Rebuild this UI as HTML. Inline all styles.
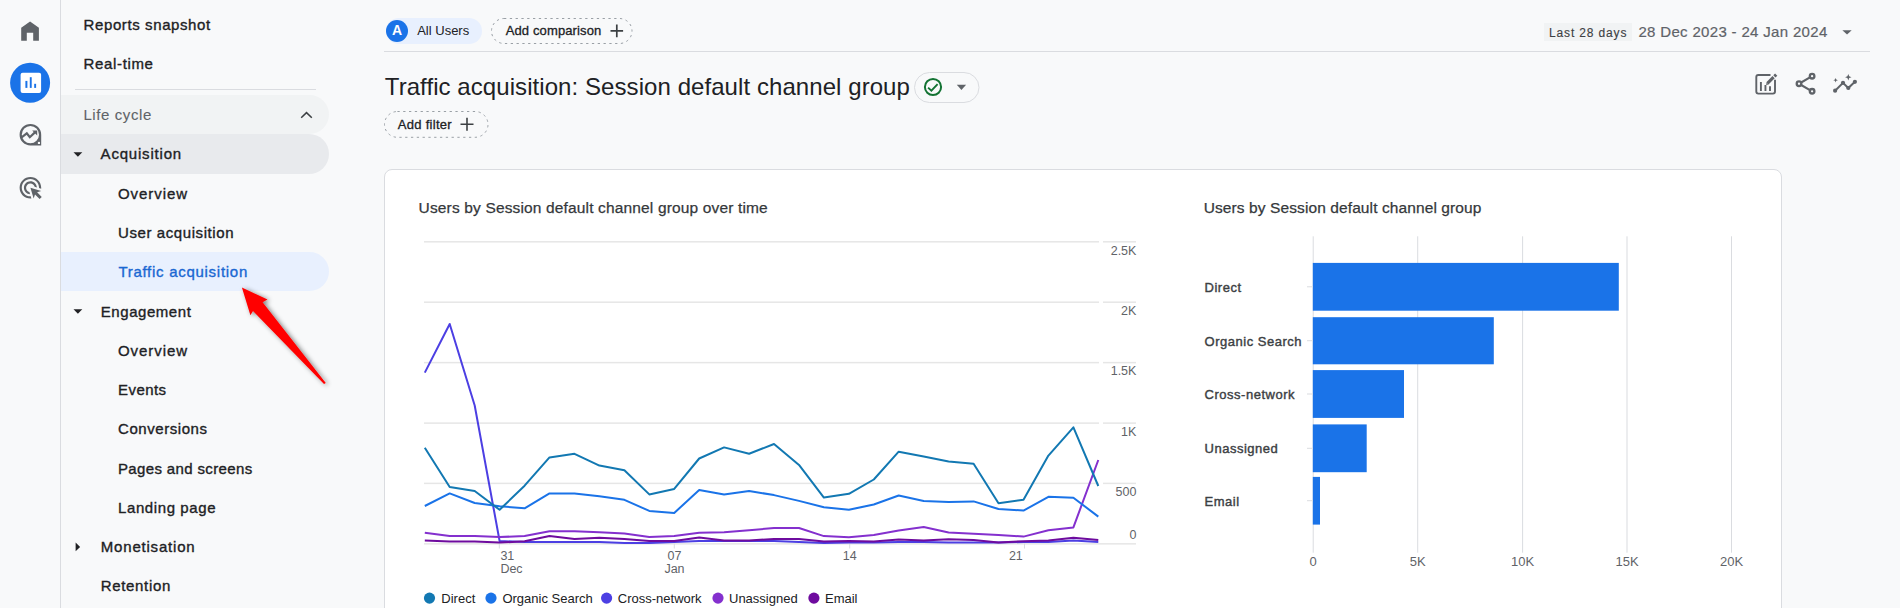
<!DOCTYPE html>
<html><head><meta charset="utf-8"><style>
html,body{margin:0;padding:0;}
body{width:1900px;height:608px;overflow:hidden;position:relative;background:#f8f9fa;font-family:"Liberation Sans", sans-serif;}
.t{position:absolute;white-space:nowrap;font-family:"Liberation Sans", sans-serif;}
</style></head><body>
<div style="position:absolute;left:60px;top:0px;width:1px;height:608px;background:#dadce0"></div>
<svg style="position:absolute;left:0;top:0" width="60" height="608">
<path d="M30.07 21.5 L38.9 27.8 V40.8 H33.2 V32.7 H26.8 V40.8 H21.2 V27.8 Z" fill="#5f6368"/>
<circle cx="30.1" cy="82.85" r="20" fill="#1a73e8"/>
<rect x="20.6" y="72.7" width="20.5" height="20.3" rx="2" fill="#fff"/>
<rect x="25.4" y="80.9" width="2" height="7" fill="#1a73e8"/>
<rect x="29.8" y="77.2" width="1.9" height="10.7" fill="#1a73e8"/>
<rect x="34.2" y="83.8" width="1.9" height="4.1" fill="#1a73e8"/>
<path d="M30.4 123.9 A10.8 10.8 0 1 0 30.4 145.5 H41.2 V134.7 A10.8 10.8 0 0 0 30.4 123.9 Z M30.4 126.1 A8.6 8.6 0 1 1 30.4 143.3 A8.6 8.6 0 1 1 30.4 126.1 Z" fill="#5f6368" fill-rule="evenodd"/>
<rect x="37.9" y="141.9" width="2.1" height="2.1" fill="#f8f9fa"/>
<polyline points="21.6,137.3 26.8,133.3 29.8,137.2 35.2,132.1" fill="none" stroke="#5f6368" stroke-width="2.2"/>
<path d="M32.2 130.4 H37.2 V135.4 Z" fill="#5f6368"/>
<g transform="translate(17.45,174.75) scale(1.08)"><path d="M11.71 17.99C8.53 17.84 6 15.22 6 12c0-3.310 2.69-6 6-6 3.22 0 5.840 2.53 5.99 5.71l-2.1-.63C15.48 9.310 13.89 8 12 8c-2.21 0-4 1.79-4 4 0 1.89 1.31 3.48 3.08 3.89l.63 2.1zM22 12c0 .3-.01.6-.04.9l-1.97-.59c.01-.1.01-.21.01-.31 0-4.42-3.58-8-8-8s-8 3.58-8 8 3.58 8 8 8c.1 0 .21 0 .31-.01l.59 1.97c-.3.03-.6.04-.9.04-5.52 0-10-4.48-10-10S6.48 2 12 2s10 4.48 10 10zm-3.77 4.260L22 15l-10-3 3 10 1.26-3.77 4.27 4.27 1.98-1.98-4.28-4.26z" fill="#5f6368"/></g>
</svg>
<div class="t" style="left:83.60px;top:16.80px;font-size:15px;line-height:15px;color:#202124;font-weight:normal;letter-spacing:0.6px;-webkit-text-stroke:0.35px #202124;">Reports snapshot</div>
<div class="t" style="left:83.60px;top:55.70px;font-size:15px;line-height:15px;color:#202124;font-weight:normal;letter-spacing:0.64px;-webkit-text-stroke:0.35px #202124;">Real-time</div>
<div style="position:absolute;left:75px;top:89px;width:241px;height:1px;background:#dadce0"></div>
<div style="position:absolute;left:61px;top:95px;width:268px;height:39px;background:#f1f3f4;border-radius:0 20px 20px 0"></div>
<div class="t" style="left:83.40px;top:107.10px;font-size:15px;line-height:15px;color:#5f6368;font-weight:normal;letter-spacing:0.6px;-webkit-text-stroke:0.1px #5f6368;">Life cycle</div>
<div style="position:absolute;left:61px;top:134px;width:268px;height:40px;background:#e8eaed;border-radius:0 20px 20px 0"></div>
<div class="t" style="left:100.60px;top:145.75px;font-size:15px;line-height:15px;color:#202124;font-weight:normal;letter-spacing:0.8px;-webkit-text-stroke:0.35px #202124;">Acquisition</div>
<div class="t" style="left:118.00px;top:185.90px;font-size:15px;line-height:15px;color:#202124;font-weight:normal;letter-spacing:0.95px;-webkit-text-stroke:0.35px #202124;">Overview</div>
<div class="t" style="left:118.00px;top:225.10px;font-size:15px;line-height:15px;color:#202124;font-weight:normal;letter-spacing:0.59px;-webkit-text-stroke:0.35px #202124;">User acquisition</div>
<div style="position:absolute;left:61px;top:252px;width:268px;height:39px;background:#e8f0fe;border-radius:0 20px 20px 0"></div>
<div class="t" style="left:118.40px;top:264.00px;font-size:15px;line-height:15px;color:#1967d2;font-weight:normal;letter-spacing:0.72px;-webkit-text-stroke:0.35px #1967d2;">Traffic acquisition</div>
<div class="t" style="left:100.80px;top:304.00px;font-size:15px;line-height:15px;color:#202124;font-weight:normal;letter-spacing:0.55px;-webkit-text-stroke:0.35px #202124;">Engagement</div>
<div class="t" style="left:118.00px;top:343.00px;font-size:15px;line-height:15px;color:#202124;font-weight:normal;letter-spacing:0.95px;-webkit-text-stroke:0.35px #202124;">Overview</div>
<div class="t" style="left:118.00px;top:382.10px;font-size:15px;line-height:15px;color:#202124;font-weight:normal;letter-spacing:0.45px;-webkit-text-stroke:0.35px #202124;">Events</div>
<div class="t" style="left:118.00px;top:421.00px;font-size:15px;line-height:15px;color:#202124;font-weight:normal;letter-spacing:0.56px;-webkit-text-stroke:0.35px #202124;">Conversions</div>
<div class="t" style="left:118.00px;top:461.00px;font-size:15px;line-height:15px;color:#202124;font-weight:normal;letter-spacing:0.36px;-webkit-text-stroke:0.35px #202124;">Pages and screens</div>
<div class="t" style="left:118.00px;top:499.50px;font-size:15px;line-height:15px;color:#202124;font-weight:normal;letter-spacing:0.6px;-webkit-text-stroke:0.35px #202124;">Landing page</div>
<div class="t" style="left:100.80px;top:538.60px;font-size:15px;line-height:15px;color:#202124;font-weight:normal;letter-spacing:0.8px;-webkit-text-stroke:0.35px #202124;">Monetisation</div>
<div class="t" style="left:100.80px;top:577.80px;font-size:15px;line-height:15px;color:#202124;font-weight:normal;letter-spacing:0.66px;-webkit-text-stroke:0.35px #202124;">Retention</div>
<svg style="position:absolute;left:0;top:0" width="340" height="608">
<polyline points="301.2,117.8 306.5,112.6 311.8,117.8" fill="none" stroke="#3c4043" stroke-width="1.5"/>
<path d="M73.5 152.2 H82.3 L77.9 156.7 Z" fill="#202124"/>
<path d="M73.5 309.2 H82.3 L77.9 313.7 Z" fill="#202124"/>
<path d="M75.6 542.5 V551.3 L80.1 546.9 Z" fill="#202124"/>
</svg>
<div style="position:absolute;left:386px;top:18px;width:96px;height:26px;background:#e8f0fe;border-radius:13px"></div>
<div style="position:absolute;left:386px;top:20px;width:22px;height:22px;background:#1a73e8;border-radius:50%"></div>
<div class="t" style="left:397.00px;transform:translateX(-50%);top:23.20px;font-size:14px;line-height:14px;color:#fff;font-weight:bold;">A</div>
<div class="t" style="left:417.20px;top:23.90px;font-size:13px;line-height:13px;color:#202124;font-weight:normal;">All Users</div>
<div class="t" style="left:505.70px;top:23.90px;font-size:13px;line-height:13px;color:#202124;font-weight:normal;letter-spacing:0.13px;-webkit-text-stroke:0.3px #202124;">Add comparison</div>
<svg style="position:absolute;left:0;top:0" width="1900" height="150">
<rect x="491.5" y="18.5" width="140.5" height="25" rx="12.5" fill="none" stroke="#9aa0a6" stroke-width="1" stroke-dasharray="2.3 3.5"/>
<rect x="384.5" y="111.5" width="103.5" height="25.8" rx="12.9" fill="none" stroke="#9aa0a6" stroke-width="1" stroke-dasharray="2.3 3.5"/>
<rect x="914.5" y="72.5" width="64.5" height="30" rx="15" fill="none" stroke="#dadce0" stroke-width="1"/>
<path d="M610.5 30.9 H623.1 M616.8 24.6 V37.3" stroke="#3c4043" stroke-width="1.7"/>
<path d="M460.5 124.2 H473.5 M467 117.7 V130.7" stroke="#3c4043" stroke-width="1.6"/>
<circle cx="933" cy="87" r="8.1" fill="none" stroke="#137333" stroke-width="2"/>
<polyline points="928.1,87.6 931.4,90.6 937.6,84.2" fill="none" stroke="#137333" stroke-width="1.9"/>
<path d="M956.8 84.8 H966.1 L961.45 90 Z" fill="#5f6368"/>
<path d="M1842.4 30.2 H1851.7 L1847.05 34.6 Z" fill="#5f6368"/>
<!-- edit chart icon -->
<path d="M1770.5 75 H1758.3 a2 2 0 0 0 -2 2 V91.6 a2 2 0 0 0 2 2 H1773 a2 2 0 0 0 2 -2 V79.8" fill="none" stroke="#5f6368" stroke-width="1.9"/>
<path d="M1760.9 82 V90.9 M1765.45 85.1 V90.9 M1770 86.2 V90.9" stroke="#5f6368" stroke-width="1.9"/>
<path d="M1767.4 83.4 L1773.6 77.2" stroke="#5f6368" stroke-width="3.1" stroke-linecap="butt"/>
<path d="M1774.4 76.4 L1776.2 74.6" stroke="#5f6368" stroke-width="3.1"/>
<path d="M1766.1 85.1 L1766.6 82.5 L1768.6 84.5 Z" fill="#5f6368"/>
<!-- share -->
<path d="M1799 83.75 L1812.1 76.2 M1799 83.75 L1812.1 91.3" stroke="#5f6368" stroke-width="2.1"/>
<circle cx="1812.1" cy="76.2" r="2.3" fill="#f8f9fa" stroke="#5f6368" stroke-width="2.3"/>
<circle cx="1799" cy="83.75" r="2.3" fill="#f8f9fa" stroke="#5f6368" stroke-width="2.3"/>
<circle cx="1812.1" cy="91.3" r="2.3" fill="#f8f9fa" stroke="#5f6368" stroke-width="2.3"/>
<!-- insights -->
<polyline points="1835.1,90.7 1843,82.8 1848.3,88 1854.9,81.8" fill="none" stroke="#5f6368" stroke-width="2"/>
<circle cx="1835.1" cy="90.7" r="2.1" fill="#5f6368"/>
<circle cx="1843" cy="82.8" r="2.1" fill="#5f6368"/>
<circle cx="1848.3" cy="88" r="2.1" fill="#5f6368"/>
<circle cx="1854.9" cy="81.8" r="2.1" fill="#5f6368"/>
<path d="M1848.3 74 L1849.2 76.3 L1851.5 77.2 L1849.2 78.1 L1848.3 80.4 L1847.4 78.1 L1845.1 77.2 L1847.4 76.3 Z" fill="#5f6368"/>
<path d="M1835.6 77.9 L1836.25 79.55 L1837.9 80.2 L1836.25 80.85 L1835.6 82.5 L1834.95 80.85 L1833.3 80.2 L1834.95 79.55 Z" fill="#5f6368"/>
</svg>
<div style="position:absolute;left:384px;top:51px;width:1486px;height:1px;background:#dadce0"></div>
<div style="position:absolute;left:1544px;top:23px;width:88px;height:18px;background:#f1f3f4"></div>
<div class="t" style="left:1549.00px;top:26.50px;font-size:12px;line-height:12px;color:#3c4043;font-weight:normal;letter-spacing:0.85px;-webkit-text-stroke:0.12px #3c4043;">Last 28 days</div>
<div class="t" style="left:1638.40px;top:23.80px;font-size:15px;line-height:15px;color:#5f6368;font-weight:normal;letter-spacing:0.33px;-webkit-text-stroke:0.2px #5f6368;">28 Dec 2023 - 24 Jan 2024</div>
<div class="t" style="left:384.80px;top:75.20px;font-size:24px;line-height:24px;color:#202124;font-weight:normal;letter-spacing:0.07px;">Traffic acquisition: Session default channel group</div>
<div class="t" style="left:397.80px;top:117.80px;font-size:13px;line-height:13px;color:#202124;font-weight:normal;letter-spacing:0.28px;-webkit-text-stroke:0.3px #202124;">Add filter</div>
<div style="position:absolute;left:384px;top:169px;width:1396px;height:460px;background:#fff;border:1px solid #dadce0;border-radius:8px;box-sizing:content-box"></div>
<div class="t" style="left:418.60px;top:199.58px;font-size:15.5px;line-height:15.5px;color:#35383b;font-weight:normal;letter-spacing:0.15px;-webkit-text-stroke:0.25px #35383b;">Users by Session default channel group over time</div>
<div class="t" style="left:1203.70px;top:199.58px;font-size:15.5px;line-height:15.5px;color:#35383b;font-weight:normal;letter-spacing:0.1px;-webkit-text-stroke:0.25px #35383b;">Users by Session default channel group</div>
<div class="t" style="right:763.60px;top:245.00px;font-size:12.5px;line-height:12.5px;color:#5f6368;font-weight:normal;">2.5K</div>
<div class="t" style="right:763.60px;top:305.00px;font-size:12.5px;line-height:12.5px;color:#5f6368;font-weight:normal;">2K</div>
<div class="t" style="right:763.60px;top:365.30px;font-size:12.5px;line-height:12.5px;color:#5f6368;font-weight:normal;">1.5K</div>
<div class="t" style="right:763.60px;top:425.60px;font-size:12.5px;line-height:12.5px;color:#5f6368;font-weight:normal;">1K</div>
<div class="t" style="right:763.60px;top:486.00px;font-size:12.5px;line-height:12.5px;color:#5f6368;font-weight:normal;">500</div>
<div class="t" style="right:763.60px;top:529.40px;font-size:12.5px;line-height:12.5px;color:#5f6368;font-weight:normal;">0</div>
<div class="t" style="left:500.40px;top:550.00px;font-size:12.5px;line-height:12.5px;color:#5f6368;font-weight:normal;">31</div>
<div class="t" style="left:500.40px;top:562.50px;font-size:12.5px;line-height:12.5px;color:#5f6368;font-weight:normal;">Dec</div>
<div class="t" style="left:674.50px;transform:translateX(-50%);top:549.70px;font-size:12.5px;line-height:12.5px;color:#5f6368;font-weight:normal;">07</div>
<div class="t" style="left:674.50px;transform:translateX(-50%);top:562.70px;font-size:12.5px;line-height:12.5px;color:#5f6368;font-weight:normal;">Jan</div>
<div class="t" style="left:849.70px;transform:translateX(-50%);top:549.80px;font-size:12.5px;line-height:12.5px;color:#5f6368;font-weight:normal;">14</div>
<div class="t" style="right:877.20px;top:549.80px;font-size:12.5px;line-height:12.5px;color:#5f6368;font-weight:normal;">21</div>
<div class="t" style="left:441.30px;top:591.90px;font-size:13px;line-height:13px;color:#202124;font-weight:normal;">Direct</div>
<div class="t" style="left:502.40px;top:591.90px;font-size:13px;line-height:13px;color:#202124;font-weight:normal;">Organic Search</div>
<div class="t" style="left:617.80px;top:591.90px;font-size:13px;line-height:13px;color:#202124;font-weight:normal;">Cross-network</div>
<div class="t" style="left:729.00px;top:591.90px;font-size:13px;line-height:13px;color:#202124;font-weight:normal;">Unassigned</div>
<div class="t" style="left:825.00px;top:591.90px;font-size:13px;line-height:13px;color:#202124;font-weight:normal;">Email</div>
<div class="t" style="left:1204.50px;top:280.90px;font-size:13px;line-height:13px;color:#3c4043;font-weight:normal;letter-spacing:0.52px;-webkit-text-stroke:0.4px #3c4043;">Direct</div>
<div class="t" style="left:1204.50px;top:334.85px;font-size:13px;line-height:13px;color:#3c4043;font-weight:normal;letter-spacing:0.52px;-webkit-text-stroke:0.4px #3c4043;">Organic Search</div>
<div class="t" style="left:1204.50px;top:388.10px;font-size:13px;line-height:13px;color:#3c4043;font-weight:normal;letter-spacing:0.52px;-webkit-text-stroke:0.4px #3c4043;">Cross-network</div>
<div class="t" style="left:1204.50px;top:442.40px;font-size:13px;line-height:13px;color:#3c4043;font-weight:normal;letter-spacing:0.52px;-webkit-text-stroke:0.4px #3c4043;">Unassigned</div>
<div class="t" style="left:1204.50px;top:494.85px;font-size:13px;line-height:13px;color:#3c4043;font-weight:normal;letter-spacing:0.52px;-webkit-text-stroke:0.4px #3c4043;">Email</div>
<div class="t" style="left:1313.20px;transform:translateX(-50%);top:554.80px;font-size:13px;line-height:13px;color:#5f6368;font-weight:normal;">0</div>
<div class="t" style="left:1417.70px;transform:translateX(-50%);top:554.80px;font-size:13px;line-height:13px;color:#5f6368;font-weight:normal;">5K</div>
<div class="t" style="left:1522.60px;transform:translateX(-50%);top:554.80px;font-size:13px;line-height:13px;color:#5f6368;font-weight:normal;">10K</div>
<div class="t" style="left:1627.00px;transform:translateX(-50%);top:554.80px;font-size:13px;line-height:13px;color:#5f6368;font-weight:normal;">15K</div>
<div class="t" style="left:1731.50px;transform:translateX(-50%);top:554.80px;font-size:13px;line-height:13px;color:#5f6368;font-weight:normal;">20K</div>
<svg style="position:absolute;left:0;top:0" width="1900" height="608">
<rect x="424" y="241.05" width="675" height="1.5" fill="#e6e6e6"/>
<rect x="1103" y="241.05" width="33" height="1.5" fill="#e6e6e6"/>
<rect x="424" y="301.45" width="675" height="1.5" fill="#e6e6e6"/>
<rect x="1103" y="301.45" width="33" height="1.5" fill="#e6e6e6"/>
<rect x="424" y="361.85" width="675" height="1.5" fill="#e6e6e6"/>
<rect x="1103" y="361.85" width="33" height="1.5" fill="#e6e6e6"/>
<rect x="424" y="422.35" width="675" height="1.5" fill="#e6e6e6"/>
<rect x="1103" y="422.35" width="33" height="1.5" fill="#e6e6e6"/>
<rect x="424" y="482.65" width="675" height="1.5" fill="#e6e6e6"/>
<rect x="1103" y="482.65" width="33" height="1.5" fill="#e6e6e6"/>
<rect x="424" y="543.1" width="712" height="1.5" fill="#e6e6e6"/>
<rect x="498.8" y="543.5" width="1" height="5" fill="#dadce0"/>
<rect x="673.8" y="543.5" width="1" height="5" fill="#dadce0"/>
<rect x="849.2" y="543.5" width="1" height="5" fill="#dadce0"/>
<rect x="1024.0" y="543.5" width="1" height="5" fill="#dadce0"/>
<polyline points="424.8,372.6 449.7,324.0 474.7,405.5 499.6,541.0 524.6,542.0 549.5,542.0 574.5,542.0 599.4,542.0 624.4,543.0 649.3,543.0 674.2,542.0 699.2,541.0 724.1,541.0 749.1,541.0 774.0,541.0 799.0,542.0 823.9,543.0 848.9,542.5 873.8,542.5 898.7,542.0 923.7,542.0 948.6,542.5 973.6,542.5 998.5,542.5 1023.5,542.0 1048.4,542.0 1073.4,540.5 1098.3,542.0" fill="none" stroke="#4c3fe3" stroke-width="2" stroke-linejoin="round"/>
<polyline points="424.8,540.4 449.7,541.5 474.7,541.5 499.6,542.6 524.6,541.3 549.5,536.1 574.5,539.1 599.4,537.8 624.4,539.1 649.3,540.9 674.2,540.9 699.2,537.6 724.1,540.4 749.1,540.4 774.0,539.0 799.0,539.0 823.9,541.5 848.9,540.9 873.8,541.5 898.7,539.4 923.7,540.4 948.6,539.2 973.6,540.0 998.5,542.4 1023.5,541.2 1048.4,540.5 1073.4,537.8 1098.3,540.0" fill="none" stroke="#6e0b9e" stroke-width="2" stroke-linejoin="round"/>
<polyline points="424.8,532.7 449.7,536.1 474.7,536.1 499.6,537.0 524.6,536.1 549.5,531.2 574.5,531.2 599.4,532.2 624.4,533.4 649.3,537.0 674.2,536.0 699.2,532.7 724.1,532.3 749.1,530.2 774.0,528.0 799.0,528.0 823.9,536.1 848.9,537.2 873.8,535.1 898.7,530.6 923.7,527.0 948.6,532.6 973.6,533.8 998.5,535.0 1023.5,536.6 1048.4,530.2 1073.4,527.4 1098.3,460.0" fill="none" stroke="#8430ce" stroke-width="2" stroke-linejoin="round"/>
<polyline points="424.8,506.0 449.7,493.4 474.7,503.0 499.6,506.2 524.6,508.3 549.5,493.4 574.5,493.4 599.4,496.2 624.4,499.8 649.3,510.9 674.2,513.0 699.2,490.0 724.1,494.4 749.1,491.0 774.0,495.1 799.0,500.9 823.9,507.3 848.9,509.8 873.8,504.5 898.7,495.5 923.7,500.9 948.6,501.9 973.6,501.4 998.5,509.0 1023.5,510.6 1048.4,496.8 1073.4,497.7 1098.3,516.6" fill="none" stroke="#1a73e8" stroke-width="2" stroke-linejoin="round"/>
<polyline points="424.8,447.8 449.7,487.0 474.7,491.0 499.6,509.8 524.6,485.7 549.5,457.4 574.5,453.8 599.4,465.6 624.4,470.3 649.3,494.4 674.2,488.9 699.2,458.5 724.1,447.4 749.1,453.8 774.0,444.0 799.0,464.9 823.9,497.6 848.9,493.8 873.8,479.5 898.7,451.7 923.7,456.4 948.6,461.4 973.6,463.7 998.5,503.2 1023.5,499.8 1048.4,455.6 1073.4,427.3 1098.3,486.0" fill="none" stroke="#1278b2" stroke-width="2" stroke-linejoin="round"/>
<rect x="1312.7" y="236.3" width="1" height="316.4" fill="#dadce0"/>
<rect x="1417.2" y="236.3" width="1" height="316.4" fill="#dadce0"/>
<rect x="1522.1" y="236.3" width="1" height="316.4" fill="#dadce0"/>
<rect x="1626.5" y="236.3" width="1" height="316.4" fill="#dadce0"/>
<rect x="1731.0" y="236.3" width="1" height="316.4" fill="#dadce0"/>
<rect x="1312.8" y="262.9" width="306.0" height="47.8" fill="#1a73e8"/>
<rect x="1307" y="286.3" width="6" height="1" fill="#dadce0"/>
<rect x="1312.8" y="317.2" width="181.0" height="47.1" fill="#1a73e8"/>
<rect x="1307" y="340.2" width="6" height="1" fill="#dadce0"/>
<rect x="1312.8" y="370.1" width="91.2" height="47.8" fill="#1a73e8"/>
<rect x="1307" y="393.5" width="6" height="1" fill="#dadce0"/>
<rect x="1312.8" y="424.4" width="53.9" height="47.8" fill="#1a73e8"/>
<rect x="1307" y="447.8" width="6" height="1" fill="#dadce0"/>
<rect x="1312.8" y="476.9" width="7.2" height="47.7" fill="#1a73e8"/>
<rect x="1307" y="500.2" width="6" height="1" fill="#dadce0"/>
<circle cx="429.5" cy="598.1" r="5.6" fill="#1278b2"/>
<circle cx="491" cy="598.1" r="5.6" fill="#1a73e8"/>
<circle cx="606.6" cy="598.1" r="5.6" fill="#4c3fe3"/>
<circle cx="718" cy="598.1" r="5.6" fill="#8430ce"/>
<circle cx="813.9" cy="598.1" r="5.6" fill="#6e0b9e"/>
<defs><filter id="sh" x="-30%" y="-30%" width="160%" height="160%"><feGaussianBlur in="SourceAlpha" stdDeviation="2.4"/><feOffset dx="1.5" dy="0.8"/><feComponentTransfer><feFuncA type="linear" slope="0.5"/></feComponentTransfer><feMerge><feMergeNode/><feMergeNode in="SourceGraphic"/></feMerge></filter></defs>
<path filter="url(#sh)" d="M241.9 287.6 L267.5 299.5 L262.6 302.2 L325.8 382.9 L324.0 383.9 L253.0 310.9 L250.4 315.3 Z" fill="#ff0000"/>
</svg>
</body></html>
